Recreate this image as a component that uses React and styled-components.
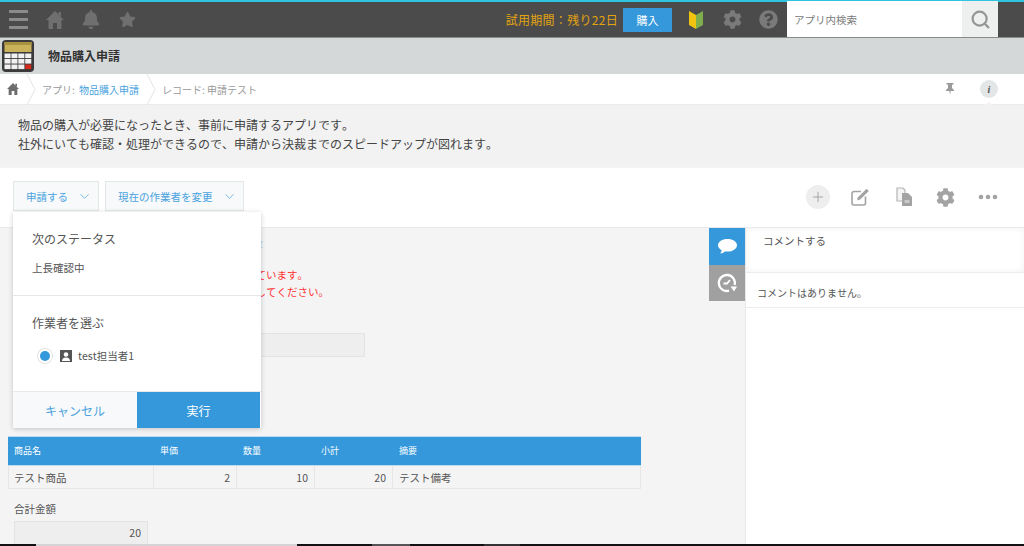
import React from "react";
import styled, { createGlobalStyle } from "styled-components";
import { FaBell, FaStar, FaCog, FaQuestionCircle } from "react-icons/fa";
import { Search, ChevronDown, Plus } from "lucide-react";

const Global = createGlobalStyle`
  html, body { margin: 0; padding: 0; height: 100%; overflow: hidden; background: #fff; }
  body {
    font-family: "Noto Sans CJK JP", "Noto Sans", sans-serif;
    color: #555;
    font-kerning: none;
    text-spacing-trim: space-all;
  }
  * { box-sizing: border-box; }
`;

const Page = styled.div`
  display: flex;
  flex-direction: column;
  height: 546px;
  width: 1024px;
  overflow: hidden;
`;

const TopBar = styled.header`
  height: 38px;
  flex: none;
  display: flex;
  align-items: center;
  background: #4b4b4b;
  border-top: 2px solid #2fc4e2;
  border-bottom: 1px solid #8a8a8a;
`;
const TopIcons = styled.div`
  display: flex;
  align-items: center;
  color: #6f6f6f;
  padding-left: 9px;
  gap: 18px;
  flex: 1;
`;
const Burger = styled.div`
  width: 19px;
  height: 19px;
  display: flex;
  flex-direction: column;
  justify-content: space-between;
  & > i { display: block; height: 3px; background: #8b8b8b; }
`;
const TopGlyph = styled.span`
  width: 18px;
  display: flex;
  justify-content: center;
`;
const Trial = styled.span`
  color: #e3a40f;
  font-size: 12px;
  letter-spacing: 0.3px;
  margin-right: 5px;
`;
const BuyButton = styled.button`
  width: 49px;
  height: 24px;
  border: 0;
  padding: 0;
  background: #3498db;
  color: #fff;
  font: inherit;
  font-size: 11px;
  margin-right: 14px;
`;
const TopIconSlot = styled.span`
  display: flex;
  align-items: center;
  justify-content: center;
  color: #7a7a7a;
  font-size: 19px;
  width: 20px;
  margin-right: ${(p) => p.$gap}px;
`;
const SearchBox = styled.div`
  width: 211px;
  height: 36px;
  margin-top: -1px;
  background: #fff;
  display: flex;
  align-items: center;
  padding-left: 7px;
  font-size: 10.5px;
  color: #7b7b7b;
`;
const SearchLabel = styled.span`
  flex: 1;
`;
const SearchButton = styled.span`
  width: 36px;
  height: 36px;
  background: #eeefef;
  color: #969696;
  display: flex;
  align-items: center;
  justify-content: center;
`;
const TopTail = styled.div`
  width: 26px;
`;

const AppBar = styled.div`
  height: 36px;
  flex: none;
  background: #d4d8d8;
  display: flex;
  align-items: center;
  padding-left: 2px;
  gap: 14px;
`;
const AppTitle = styled.h1`
  margin: 0;
  padding-bottom: 2px;
  font-size: 12px;
  font-weight: 700;
  color: #333;
`;

const Crumbs = styled.nav`
  position: relative;
  height: 31px;
  flex: none;
  background: #fff;
  display: flex;
  align-items: center;
  font-size: 10px;
  color: #9a9a9a;
  border-bottom: 1px solid #ececec;
`;
const CrumbHome = styled.span`
  width: 26px;
  padding-left: 7px;
  color: #6d6d6d;
  display: flex;
`;
const Sep = styled.svg`
  width: 10px;
  height: 31px;
  flex: none;
  margin-right: 6px;
`;
const CrumbLink = styled.a`
  color: #4aa3e0;
  margin: 0 -2px 0 2px;
`;
const Crumb = styled.span`
  flex: none;
  white-space: nowrap;
  margin-right: 9px;
`;
const CrumbRight = styled.div`
  margin-left: auto;
  display: flex;
  align-items: center;
  padding-right: 26px;
  gap: 25px;
`;
const InfoDot = styled.span`
  position: relative;
  width: 18px;
  height: 18px;
  border-radius: 50%;
  background: #e2e6e6;
  color: #555;
  font: italic 700 10px "Liberation Serif", serif;
  display: flex;
  align-items: center;
  justify-content: center;
  &::after {
    content: "";
    position: absolute;
    left: 5px;
    bottom: -7px;
    border-left: 4px solid transparent;
    border-right: 4px solid transparent;
    border-bottom: 3px solid #f2f2f2;
  }
`;

const Description = styled.div`
  height: 62px;
  flex: none;
  background: #f2f2f2;
  padding: 10px 18px;
  font-size: 12px;
  line-height: 19px;
  color: #444;
`;

const Toolbar = styled.div`
  position: relative;
  height: 60px;
  flex: none;
  background: #fff;
  display: flex;
  align-items: flex-start;
  padding: 13px 0 0 13px;
  gap: 6px;
  border-top: 1px solid #f4f4f4;
  z-index: 2;
`;
const ActionButton = styled.button`
  height: 30px;
  padding: 0 6px 0 12px;
  background: #f7f9fa;
  border: 1px solid #e3e7e8;
  color: #4aa3e0;
  font: inherit;
  font-size: 10.5px;
  display: flex;
  align-items: center;
  gap: 9px;
`;
const ToolIcons = styled.div`
  margin-left: auto;
  margin-top: 1px;
  display: flex;
  align-items: center;
  height: 30px;
  color: #a3a3a3;
`;
const ToolIcon = styled.span`
  width: ${(p) => p.$w}px;
  display: flex;
  justify-content: center;
  align-items: center;
`;
const PlusCircle = styled.span`
  width: 24px;
  height: 24px;
  border-radius: 50%;
  background: #eeeeee;
  display: flex;
  align-items: center;
  justify-content: center;
  color: #a0a0a0;
`;

const Popover = styled.div`
  position: absolute;
  left: 13px;
  top: 44px;
  width: 248px;
  height: 216px;
  background: #fff;
  box-shadow: 0 1px 5px rgba(0, 0, 0, 0.2);
  display: flex;
  flex-direction: column;
`;
const PopSection = styled.div`
  padding: 18px 19px 0;
  height: ${(p) => (p.$h ? `${p.$h}px` : "auto")};
  border-bottom: ${(p) => (p.$line ? "1px solid #e6e6e6" : "0")};
`;
const PopTitle = styled.div`
  font-size: 12px;
  line-height: 18px;
  color: #555;
`;
const PopValue = styled.div`
  font-size: 10.5px;
  line-height: 16px;
  margin-top: 12px;
`;
const AssigneeRow = styled.label`
  display: flex;
  align-items: center;
  margin-top: 16px;
  font-size: 10.5px;
  color: #555;
`;
const RadioDot = styled.span`
  width: 10px;
  height: 10px;
  border-radius: 50%;
  background: #3498db;
  box-shadow: 0 0 0 2px #fff, 0 0 0 3px #e4e4e4;
  margin: 0 10px 0 8px;
`;
const PersonBadge = styled.svg`
  width: 12px;
  height: 12px;
  margin-right: 6px;
`;
const PopFoot = styled.div`
  margin-top: auto;
  height: 37px;
  display: flex;
  border-top: 1px solid #eaeaea;
`;
const CancelBtn = styled.button`
  width: 124px;
  border: 0;
  background: #f7f9fa;
  color: #4aa3e0;
  font: inherit;
  font-size: 12px;
  padding: 0;
`;
const RunBtn = styled.button`
  flex: 1;
  border: 0;
  margin-right: 1px;
  background: #3498db;
  color: #fff;
  font: inherit;
  font-size: 12px;
  padding: 0;
`;

const Main = styled.div`
  flex: 1;
  min-height: 0;
  display: flex;
  background: #f4f4f4;
  border-top: 1px solid #eaeaea;
`;
const RecordArea = styled.section`
  width: 709px;
  flex: none;
  overflow: hidden;
  padding: 9px 0 0 8px;
`;
const LinkLine = styled.div`
  font-size: 10.5px;
  line-height: 16px;
  padding-left: 213px;
  color: #a9d3ef;
`;
const RedNote = styled.div`
  margin-top: 13px;
  padding-left: 6px;
  font-size: 10.5px;
  line-height: 17px;
  color: #f33;
  white-space: nowrap;
`;
const Field = styled.div`
  margin: 33px 0 0 6px;
  width: 351px;
  height: 24px;
  background: #eeeeee;
  border: 1px solid #e3e3e3;
`;
const Table = styled.div`
  margin-top: 79px;
  width: 633px;
`;
const Row = styled.div`
  display: grid;
  grid-template-columns: 146px 83px 78px 78px 1fr;
`;
const HeadCell = styled.div`
  height: 30px;
  background: #3498db;
  color: #fff;
  font-size: 9px;
  line-height: 28px;
  padding-left: 6px;
  border-top: 1px solid #bcdcf2;
  border-bottom: 1px solid #bcdcf2;
`;
const BodyCell = styled.div`
  height: 23px;
  font-size: 10.5px;
  line-height: 23px;
  padding: 0 6px;
  text-align: ${(p) => (p.$num ? "right" : "left")};
  border-right: 1px solid #e6e6e6;
  border-bottom: 1px solid #e6e6e6;
  &:first-child { border-left: 1px solid #e6e6e6; padding-left: 5px; }
`;
const TotalLabel = styled.div`
  margin: 12px 0 0 6px;
  font-size: 10.5px;
  line-height: 16px;
`;
const TotalValue = styled.div`
  margin: 4px 0 0 6px;
  width: 134px;
  height: 24px;
  background: #eeeeee;
  border: 1px solid #e3e3e3;
  font-size: 10.5px;
  line-height: 22px;
  text-align: right;
  padding-right: 6px;
`;

const Rail = styled.div`
  width: 36px;
  flex: none;
`;
const RailTab = styled.div`
  height: ${(p) => p.$h}px;
  background: ${(p) => p.$bg};
  display: flex;
  align-items: center;
  justify-content: center;
`;
const Side = styled.aside`
  flex: 1;
  background: #fff;
  border-left: 1px solid #e8e8e8;
`;
const CommentInput = styled.div`
  height: 45px;
  padding: 5px 17px;
  font-size: 10.5px;
  line-height: 16px;
  border-bottom: 1px solid #ececec;
  box-shadow: inset 0 0 6px #f0f0f0;
`;
const NoComment = styled.div`
  height: 35px;
  padding: 12px 11px 0;
  font-size: 10px;
  line-height: 15px;
  border-bottom: 1px solid #ececec;
`;

const Bottom = styled.div`
  height: 2px;
  flex: none;
  display: flex;
  background: #111;
`;
const BottomPiece = styled.i`
  display: block;
  width: ${(p) => p.$w}px;
  margin-left: ${(p) => p.$at}px;
  background: ${(p) => p.$bg};
`;

const Calculator = () => (
  <svg width="32" height="32" viewBox="0 0 32 32">
    <rect x="0" y="0" width="32" height="32" rx="4" fill="#3a3a3a" />
    <rect x="2.5" y="2" width="27" height="10" fill="#c9b25a" />
    <rect x="2.5" y="2" width="27" height="3" fill="#a8923f" />
    {[0, 1, 2].map((r) =>
      [0, 1, 2, 3].map((c) => (
        <rect
          key={`${r}-${c}`}
          x={2.5 + c * 6.9}
          y={13.5 + r * 5.5}
          width="6.1"
          height="4.6"
          fill={r === 2 && c === 3 ? "#d42a1c" : "#f1f1f1"}
        />
      ))
    )}
  </svg>
);

const Beginner = () => (
  <svg width="16" height="20" viewBox="0 0 16 20">
    <path d="M1 1l7 4v14l-7-4z" fill="#f2c40f" />
    <path d="M15 1l-7 4v14l7-4z" fill="#7fae4d" />
  </svg>
);

const House = ({ size }) => (
  <svg width={size} height={size} viewBox="0 0 18 18" fill="currentColor">
    <path d="M9 0l9 9h-2.500v9H11v-6H7v6H2.500V9H0z" />
    <path d="M12.500 1H15v5l-2.500-2.500z" />
  </svg>
);

const Chevron = () => <ChevronDown size={15} strokeWidth={1.4} color="#6bb0e3" />;

const CrumbSep = () => (
  <Sep viewBox="0 0 10 31">
    <path d="M1 0l8 15.500L1 31" fill="none" stroke="#e2e6e6" />
  </Sep>
);

const Pin = () => (
  <svg width="10" height="12" viewBox="0 0 10 12" fill="#9a9a9a">
    <path d="M1.500 0h7v1.500H7v3.500l2 2v1H5.600L5 12l-.6-4H1V7l2-2V1.500H1.500z" />
  </svg>
);

const EditIcon = () => (
  <svg width="20" height="20" viewBox="0 0 20 20" fill="none" stroke="#a3a3a3">
    <path d="M15.500 9.500V16a2 2 0 0 1-2 2H4a2 2 0 0 1-2-2V6.500a2 2 0 0 1 2-2h7" strokeWidth="1.6" />
    <path d="M7 13.500l1-3.200L16.600 1.800l2.200 2.200-8.600 8.500z" fill="#a3a3a3" stroke="none" />
  </svg>
);

const CopyIcon = () => (
  <svg width="18" height="20" viewBox="0 0 18 20">
    <path d="M2 1h6l2 2v11H2z" fill="#f4f4f4" stroke="#b5b5b5" strokeWidth="1.2" />
    <path d="M7 6h6l4 4v9H7z" fill="#a3a3a3" />
    <path d="M9.500 13h5v3h-5z" fill="#c9c9c9" />
  </svg>
);

const DotsIcon = () => (
  <svg width="20" height="6" viewBox="0 0 20 6" fill="#a3a3a3">
    <circle cx="3" cy="3" r="2.3" />
    <circle cx="10" cy="3" r="2.3" />
    <circle cx="17" cy="3" r="2.3" />
  </svg>
);

const Bubble = () => (
  <svg width="19" height="15" viewBox="0 0 19 15" fill="#fff">
    <path d="M9.500 0C4.300 0 0 2.700 0 6.200c0 2.100 1.500 3.900 3.700 5-.2 1.300-.8 2.400-1.600 3.300 1.900-.2 3.600-1 4.800-2.100.8.2 1.700.2 2.600.2 5.200 0 9.500-2.800 9.500-6.400S14.700 0 9.500 0z" />
  </svg>
);

const History = () => (
  <svg width="22" height="22" viewBox="0 0 22 22" fill="none" stroke="#fff" strokeWidth="2.3">
    <path d="M13 18.700A8 8 0 1 1 18.600 13" />
    <path d="M7.500 11.500H11l3-3.500" strokeWidth="1.800" />
    <path d="M14.500 14.500h6.500l-3 5z" fill="#fff" stroke="none" />
  </svg>
);

export default function App() {
  return (
    <Page>
      <Global />
      <TopBar>
        <TopIcons>
          <Burger><i /><i /><i /></Burger>
          <TopGlyph><House size={18} /></TopGlyph>
          <TopGlyph><FaBell size={19} /></TopGlyph>
          <TopGlyph><FaStar size={17} /></TopGlyph>
        </TopIcons>
        <Trial>試用期間：残り22日</Trial>
        <BuyButton>購入</BuyButton>
        <TopIconSlot $gap={16}><Beginner /></TopIconSlot>
        <TopIconSlot $gap={16}><FaCog /></TopIconSlot>
        <TopIconSlot $gap={9}><FaQuestionCircle /></TopIconSlot>
        <SearchBox>
          <SearchLabel>アプリ内検索</SearchLabel>
          <SearchButton><Search size={21} strokeWidth={2.5} /></SearchButton>
        </SearchBox>
        <TopTail />
      </TopBar>

      <AppBar>
        <Calculator />
        <AppTitle>物品購入申請</AppTitle>
      </AppBar>

      <Crumbs>
        <CrumbHome><House size={12} /></CrumbHome>
        <CrumbSep />
        <Crumb>アプリ: <CrumbLink>物品購入申請</CrumbLink></Crumb>
        <CrumbSep />
        <Crumb>レコード: 申請テスト</Crumb>
        <CrumbRight>
          <Pin />
          <InfoDot>i</InfoDot>
        </CrumbRight>
      </Crumbs>

      <Description>
        物品の購入が必要になったとき、事前に申請するアプリです。<br />
        社外にいても確認・処理ができるので、申請から決裁までのスピードアップが図れます。
      </Description>

      <Toolbar>
        <ActionButton>申請する<Chevron /></ActionButton>
        <ActionButton>現在の作業者を変更<Chevron /></ActionButton>
        <ToolIcons>
          <ToolIcon $w={24}><PlusCircle><Plus size={16} strokeWidth={1.4} /></PlusCircle></ToolIcon>
          <ToolIcon $w={59}><EditIcon /></ToolIcon>
          <ToolIcon $w={29}><CopyIcon /></ToolIcon>
          <ToolIcon $w={54}><FaCog size={19} /></ToolIcon>
          <ToolIcon $w={32}><DotsIcon /></ToolIcon>
          <ToolIcon $w={20} />
        </ToolIcons>
        <Popover>
          <PopSection $h={84} $line>
            <PopTitle>次のステータス</PopTitle>
            <PopValue>上長確認中</PopValue>
          </PopSection>
          <PopSection>
            <PopTitle>作業者を選ぶ</PopTitle>
            <AssigneeRow>
              <RadioDot />
              <PersonBadge viewBox="0 0 12 12">
                <rect width="12" height="12" fill="#555" />
                <circle cx="6" cy="4.500" r="2.300" fill="#fff" />
                <path d="M2 11c0-2.600 1.800-3.600 4-3.600s4 1 4 3.600z" fill="#fff" />
              </PersonBadge>
              test担当者1
            </AssigneeRow>
          </PopSection>
          <PopFoot>
            <CancelBtn>キャンセル</CancelBtn>
            <RunBtn>実行</RunBtn>
          </PopFoot>
        </Popover>
      </Toolbar>

      <Main>
        <RecordArea>
          <LinkLine>申請内容</LinkLine>
          <RedNote>
            この申請には、現在の作業者として上長が設定されています。<br />
            内容を確認のうえ、問題がなければ実行ボタンを押してください。
          </RedNote>
          <Field />
          <Table>
            <Row>
              <HeadCell>商品名</HeadCell>
              <HeadCell>単価</HeadCell>
              <HeadCell>数量</HeadCell>
              <HeadCell>小計</HeadCell>
              <HeadCell>摘要</HeadCell>
            </Row>
            <Row>
              <BodyCell>テスト商品</BodyCell>
              <BodyCell $num>2</BodyCell>
              <BodyCell $num>10</BodyCell>
              <BodyCell $num>20</BodyCell>
              <BodyCell>テスト備考</BodyCell>
            </Row>
          </Table>
          <TotalLabel>合計金額</TotalLabel>
          <TotalValue>20</TotalValue>
        </RecordArea>
        <Rail>
          <RailTab $h={37} $bg="#3498db"><Bubble /></RailTab>
          <RailTab $h={36} $bg="#a0a0a0"><History /></RailTab>
        </Rail>
        <Side>
          <CommentInput>コメントする</CommentInput>
          <NoComment>コメントはありません。</NoComment>
        </Side>
      </Main>

      <Bottom>
        <BottomPiece $at={36} $w={261} $bg="#d4d4d4" />
        <BottomPiece $at={75} $w={38} $bg="#555" />
        <BottomPiece $at={74} $w={36} $bg="#333" />
      </Bottom>
    </Page>
  );
}
